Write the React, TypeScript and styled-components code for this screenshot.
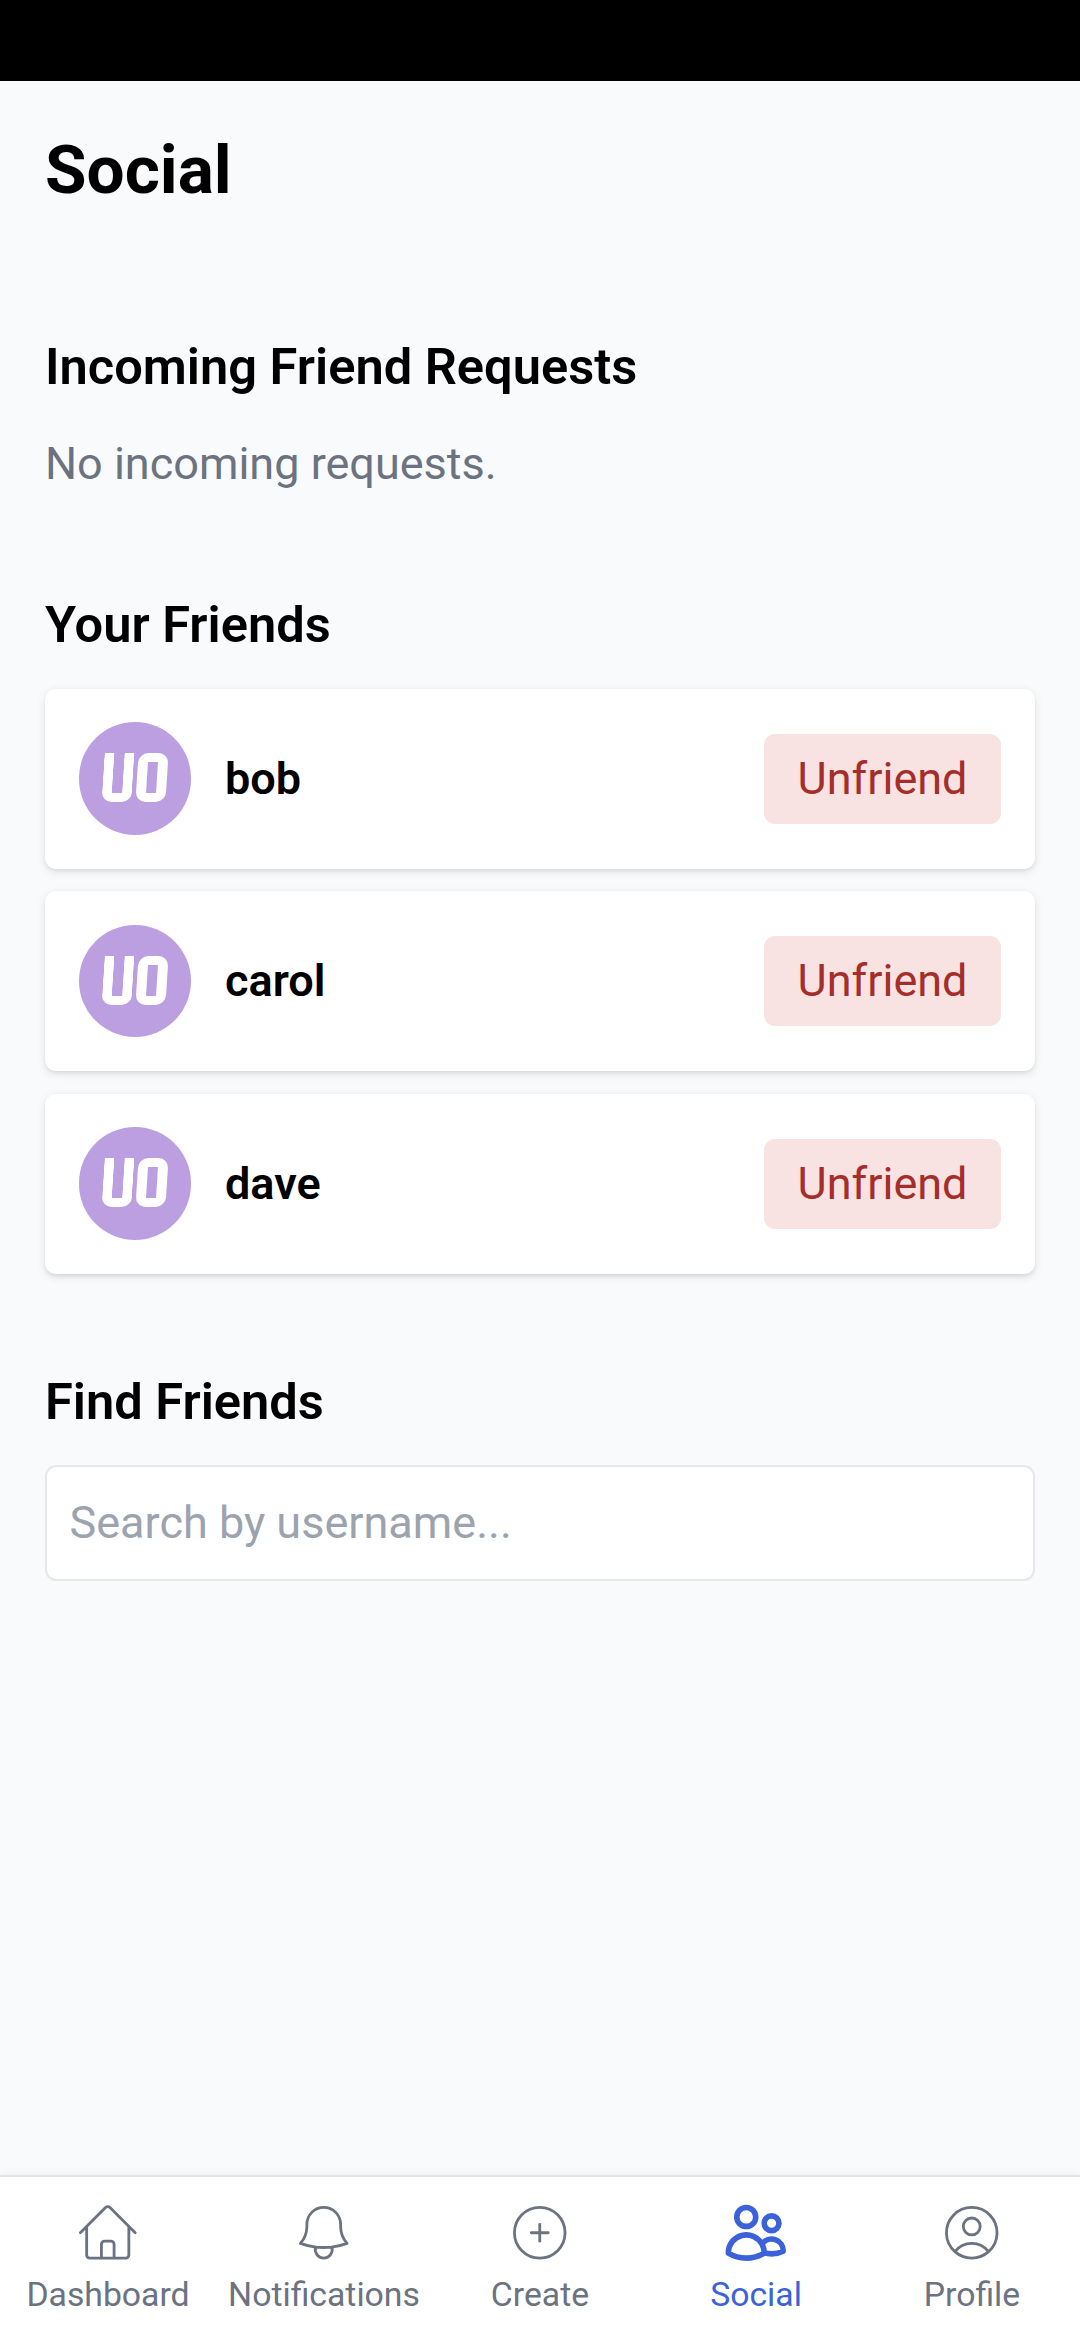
import React from 'react';
import styled, { createGlobalStyle } from 'styled-components';

const GlobalStyle = createGlobalStyle`
  *, *::before, *::after { box-sizing: border-box; }
  html, body { margin: 0; padding: 0; background: #f9fafc; }
  body { font-family: Roboto, "Liberation Sans", sans-serif; color: #000; }
`;

const Screen = styled.div`
  display: flex;
  flex-direction: column;
  width: 1080px;
  height: 2340px;
  overflow: hidden;
  background: #f9fafc;
`;

const StatusBar = styled.div`
  flex: none;
  height: 81px;
  background: #000;
`;

const Main = styled.main`
  flex: 1;
  display: flex;
  flex-direction: column;
  padding: 44px 45px 0;
`;

const Title = styled.h1`
  margin: 0 0 112px;
  font-size: 67.5px;
  line-height: 90px;
  font-weight: 700;
`;

const Section = styled.section`
  display: flex;
  flex-direction: column;
  margin-bottom: 88px;
`;

const SectionTitle = styled.h2`
  margin: 0 0 24.7px;
  font-size: 50.625px;
  line-height: 79px;
  font-weight: 600;
`;

const EmptyText = styled.p`
  margin: -0.7px 0 0;
  font-size: 45px;
  line-height: 67px;
  color: #6b7280;
`;

const FriendList = styled.ul`
  display: flex;
  flex-direction: column;
  gap: 22.5px;
  margin: 0;
  padding: 0;
  list-style: none;
`;

const FriendCard = styled.li`
  display: flex;
  align-items: center;
  height: 180px;
  padding: 0 33.75px;
  background: #fff;
  border-radius: 11.25px;
  box-shadow: 0 2.8px 8.4px rgba(0, 0, 0, 0.1), 0 2.8px 5.6px -2.8px rgba(0, 0, 0, 0.1);
`;

const Avatar = styled.div`
  display: flex;
  align-items: center;
  justify-content: center;
  gap: 3.4px;
  width: 112.5px;
  height: 112.5px;
  padding-bottom: 2px;
  border-radius: 50%;
  background: #bb9fe0;
`;

const MarkStroke = styled.span<{ $open?: boolean }>`
  width: 30px;
  height: 49px;
  border: solid #fff;
  border-width: ${(p) => (p.$open ? '0 10px 9px' : '9.5px 10px 9px')};
  border-radius: ${(p) => (p.$open ? '0 0 10px 10px' : '10px')};
  transform: skewX(-3.6deg);
`;

const FriendName = styled.span`
  flex: 1;
  margin-left: 33.75px;
  font-size: 45px;
  line-height: 67.5px;
  font-weight: 600;
`;

const UnfriendButton = styled.button`
  height: 90px;
  padding: 0 33.75px;
  border: 0;
  border-radius: 11.25px;
  background: #f8e2e2;
  color: #a52e2a;
  font-family: inherit;
  font-size: 45px;
  line-height: 67.5px;
`;

const SearchInput = styled.input`
  height: 116px;
  margin-top: -0.3px;
  padding: 0 22.5px 1.5px;
  border: 2px solid #e5e7eb;
  border-radius: 11.25px;
  background: #fff;
  font-family: inherit;
  font-size: 45px;
  outline: none;
  &::placeholder { color: #9ca3af; opacity: 1; }
`;

const TabBar = styled.nav`
  flex: none;
  display: grid;
  grid-template-columns: repeat(5, 1fr);
  height: 165px;
  padding-top: 22px;
  border-top: 2px solid #e2e4e7;
  background: #fff;
  box-shadow: 0 -2px 8px rgba(0, 0, 0, 0.04);
`;

const Tab = styled.a<{ $active?: boolean }>`
  display: flex;
  flex-direction: column;
  align-items: center;
  gap: 5px;
  color: ${(p) => (p.$active ? '#3b62d9' : '#6b7280')};
  font-size: 33.75px;
  line-height: 45px;
`;

const TabIcon = styled.svg`
  width: 67.5px;
  height: 67.5px;
  fill: none;
  stroke: currentColor;
  stroke-linecap: round;
  stroke-linejoin: round;
`;

const friends = ['bob', 'carol', 'dave'];

const tabs = [
  {
    label: 'Dashboard',
    path: 'm2.25 12 8.954-8.955c.44-.439 1.152-.439 1.591 0L21.75 12M4.5 9.75v10.125c0 .621.504 1.125 1.125 1.125H9.75v-4.875c0-.621.504-1.125 1.125-1.125h2.25c.621 0 1.125.504 1.125 1.125V21h4.125c.621 0 1.125-.504 1.125-1.125V9.75M8.25 21h8.25',
  },
  {
    label: 'Notifications',
    path: 'M14.857 17.082a23.848 23.848 0 0 0 5.454-1.31A8.967 8.967 0 0 1 18 9.75V9A6 6 0 0 0 6 9v.75a8.967 8.967 0 0 1-2.312 6.022c1.733.64 3.56 1.085 5.455 1.31m5.714 0a24.255 24.255 0 0 1-5.714 0m5.714 0a3 3 0 1 1-5.714 0',
  },
  { label: 'Create', path: 'M12 9v6m3-3H9m12 0a9 9 0 1 1-18 0 9 9 0 0 1 18 0Z' },
  {
    label: 'Social',
    active: true,
    path: 'M15 19.128a9.38 9.38 0 0 0 2.625.372 9.337 9.337 0 0 0 4.121-.952 4.125 4.125 0 0 0-7.533-2.493M15 19.128v-.003c0-1.113-.285-2.16-.786-3.07M15 19.128v.106A12.318 12.318 0 0 1 8.624 21c-2.331 0-4.512-.645-6.374-1.766l-.001-.109a6.375 6.375 0 0 1 11.964-3.07M12 6.375a3.375 3.375 0 1 1-6.75 0 3.375 3.375 0 0 1 6.75 0Zm8.25 2.25a2.625 2.625 0 1 1-5.25 0 2.625 2.625 0 0 1 5.25 0Z',
  },
  {
    label: 'Profile',
    path: 'M17.982 18.725A7.488 7.488 0 0 0 12 15.75a7.488 7.488 0 0 0-5.982 2.975m11.963 0a9 9 0 1 0-11.963 0m11.963 0A8.966 8.966 0 0 1 12 21a8.966 8.966 0 0 1-5.982-2.275M15 9.75a3 3 0 1 1-6 0 3 3 0 0 1 6 0Z',
  },
];

export default function App() {
  return (
    <Screen>
      <GlobalStyle />
      <StatusBar />
      <Main>
        <Title>Social</Title>
        <Section>
          <SectionTitle>Incoming Friend Requests</SectionTitle>
          <EmptyText>No incoming requests.</EmptyText>
        </Section>
        <Section>
          <SectionTitle>Your Friends</SectionTitle>
          <FriendList>
            {friends.map((name) => (
              <FriendCard key={name}>
                <Avatar>
                  <MarkStroke $open />
                  <MarkStroke />
                </Avatar>
                <FriendName>{name}</FriendName>
                <UnfriendButton>Unfriend</UnfriendButton>
              </FriendCard>
            ))}
          </FriendList>
        </Section>
        <Section>
          <SectionTitle>Find Friends</SectionTitle>
          <SearchInput placeholder="Search by username..." />
        </Section>
      </Main>
      <TabBar>
        {tabs.map((tab) => (
          <Tab key={tab.label} $active={tab.active}>
            <TabIcon viewBox="0 0 24 24" strokeWidth={tab.active ? 2 : 1}>
              <path d={tab.path} />
            </TabIcon>
            {tab.label}
          </Tab>
        ))}
      </TabBar>
    </Screen>
  );
}
